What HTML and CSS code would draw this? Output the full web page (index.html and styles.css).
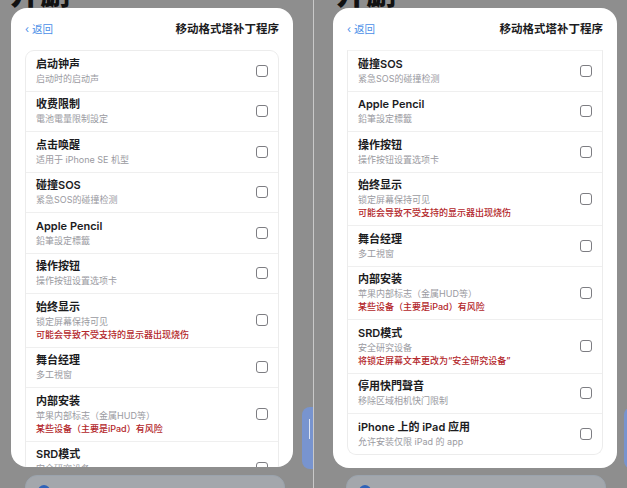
FILE: index.html
```html
<!DOCTYPE html>
<html>
<head>
	<meta charset="utf-8">
	<title>移动格式塔补丁程序</title>
	<link rel="stylesheet" href="styles.css">
</head>
<body>
	<div class="shots">
		<!-- 左侧截图：列表顶部 -->
		<div class="shot shot-left">
			<div class="under">
				<div class="under-title">开删</div>
				<div class="under-bottom"><span class="dot"></span></div>
				<div class="side-tab"><span></span></div>
			</div>
			<div class="sheet">
				<div class="sheet-head">
					<a class="back" href="#">&#8249; 返回</a>
					<h1>移动格式塔补丁程序</h1>
				</div>
				<ul class="list">
					<li class="row"><div class="txt"><b>启动钟声</b><span>启动时的启动声</span></div><i class="box"></i></li>
					<li class="row"><div class="txt"><b>收费限制</b><span>電池電量限制設定</span></div><i class="box"></i></li>
					<li class="row"><div class="txt"><b>点击唤醒</b><span>适用于 iPhone SE 机型</span></div><i class="box"></i></li>
					<li class="row"><div class="txt"><b>碰撞SOS</b><span>紧急SOS的碰撞检测</span></div><i class="box"></i></li>
					<li class="row"><div class="txt"><b>Apple Pencil</b><span>鉛筆設定標籤</span></div><i class="box"></i></li>
					<li class="row"><div class="txt"><b>操作按钮</b><span>操作按钮设置选项卡</span></div><i class="box"></i></li>
					<li class="row"><div class="txt"><b>始终显示</b><span>锁定屏幕保持可见</span><em>可能会导致不受支持的显示器出现烧伤</em></div><i class="box"></i></li>
					<li class="row"><div class="txt"><b>舞台经理</b><span>多工視窗</span></div><i class="box"></i></li>
					<li class="row"><div class="txt"><b>内部安装</b><span>苹果内部标志（金属HUD等）</span><em>某些设备（主要是iPad）有风险</em></div><i class="box"></i></li>
					<li class="row"><div class="txt"><b>SRD模式</b><span>安全研究设备</span><em>将锁定屏幕文本更改为“安全研究设备”</em></div><i class="box"></i></li>
				</ul>
			</div>
		</div>

		<!-- 右侧截图：滚动到底部 -->
		<div class="shot shot-right">
			<div class="under">
				<div class="under-title">开删</div>
				<div class="under-bottom"><span class="dot"></span></div>
				<div class="side-tab"><span></span></div>
			</div>
			<div class="sheet">
				<div class="sheet-head">
					<a class="back" href="#">&#8249; 返回</a>
					<h1>移动格式塔补丁程序</h1>
				</div>
				<ul class="list scrolled">
					<li class="row"><div class="txt"><b>碰撞SOS</b><span>紧急SOS的碰撞检测</span></div><i class="box"></i></li>
					<li class="row"><div class="txt"><b>Apple Pencil</b><span>鉛筆設定標籤</span></div><i class="box"></i></li>
					<li class="row"><div class="txt"><b>操作按钮</b><span>操作按钮设置选项卡</span></div><i class="box"></i></li>
					<li class="row"><div class="txt"><b>始终显示</b><span>锁定屏幕保持可见</span><em>可能会导致不受支持的显示器出现烧伤</em></div><i class="box"></i></li>
					<li class="row"><div class="txt"><b>舞台经理</b><span>多工視窗</span></div><i class="box"></i></li>
					<li class="row"><div class="txt"><b>内部安装</b><span>苹果内部标志（金属HUD等）</span><em>某些设备（主要是iPad）有风险</em></div><i class="box"></i></li>
					<li class="row"><div class="txt"><b>SRD模式</b><span>安全研究设备</span><em>将锁定屏幕文本更改为“安全研究设备”</em></div><i class="box"></i></li>
					<li class="row"><div class="txt"><b>停用快門聲音</b><span>移除区域相机快门限制</span></div><i class="box"></i></li>
					<li class="row"><div class="txt"><b>iPhone 上的 iPad 应用</b><span>允许安装仅限 iPad 的 app</span></div><i class="box"></i></li>
				</ul>
			</div>
		</div>
	</div>
</body>
</html>
```

FILE: styles.css
```css
body {
	margin: 0;
	font-family: Inter, "Noto Sans CJK SC", sans-serif;
	background-color: #8f8f8f;
}
.shots {
	display: flex;
	width: 627px;
	height: 488px;
	overflow: hidden;
}
.shot {
	position: relative;
	height: 488px;
	overflow: hidden;
	background-color: #8e8e8e;
}
.shot-left {
	width: 313px;
	border-right: 1px solid #c9c9c9;
}
.shot-right {
	width: 313px;
}

/* pagina de fondo (detras de la hoja) */
.under {
	height: 100%;
}
.under-title {
	margin: -24px 0 0 10px;
	font-size: 30px;
	font-weight: 800;
	line-height: 34px;
	color: #111;
}
.shot-right .under-title {
	margin-left: 22px;
}
.under-bottom {
	position: absolute;
	left: 25px;
	top: 475px;
	width: 258px;
	height: 30px;
	border: 1px solid #9aa3ad;
	border-radius: 12px;
	background-color: #a3a7ac;
}
.shot-right .under-bottom {
	left: 32px;
}
.under-bottom .dot {
	display: block;
	width: 12px;
	height: 12px;
	margin: 9px 0 0 12px;
	border-radius: 50%;
	background-color: #2f63b8;
}
.side-tab {
	position: absolute;
	right: 0;
	top: 407px;
	width: 11px;
	height: 62px;
	border-radius: 8px 0 0 8px;
	background-color: #7894cf;
}
.shot-right .side-tab {
	right: -8px;
}
.side-tab span {
	display: block;
	width: 1px;
	height: 20px;
	margin: 12px 0 0 7px;
	background-color: #dfe6f5;
}

/* hoja modal */
.sheet {
	position: absolute;
	top: 8px;
	left: 11px;
	width: 282px;
	height: 459px;
	overflow: hidden;
	border-radius: 16px;
	background-color: #fff;
}
.shot-right .sheet {
	left: 19px;
	width: 284px;
	height: 460px;
}
.sheet-head {
	display: flex;
	justify-content: space-between;
	align-items: center;
	padding: 13px 14px 0;
	height: 14px;
}
.back {
	font-size: 10.5px;
	color: #4b8fe8;
	text-decoration: none;
}
.sheet-head h1 {
	margin: 0;
	font-size: 11.5px;
	font-weight: 600;
	color: #1c1c1e;
}
.list {
	list-style: none;
	margin: 15px 14px 0;
	padding: 0;
	border: 1px solid #ececec;
	border-radius: 9px;
}
.list.scrolled {
	border-top-color: #f2f2f2;
	border-radius: 0 0 9px 9px;
}
.row {
	display: flex;
	justify-content: space-between;
	align-items: center;
	padding: 5.5px 10px 6px 10px;
	border-bottom: 1px solid #efefef;
}
.row:last-child {
	border-bottom: none;
}
.txt b {
	display: block;
	font-size: 11px;
	font-weight: 600;
	line-height: 15px;
	color: #1c1c1e;
}
.txt span, .txt em {
	display: block;
	font-size: 9px;
	font-style: normal;
	line-height: 13px;
	color: #9a9a9f;
}
.txt em {
	color: #b3262a;
	font-weight: 500;
}
.box {
	width: 10px;
	height: 10px;
	border: 1.3px solid #7d7d82;
	border-radius: 3px;
	flex-shrink: 0;
}
```
